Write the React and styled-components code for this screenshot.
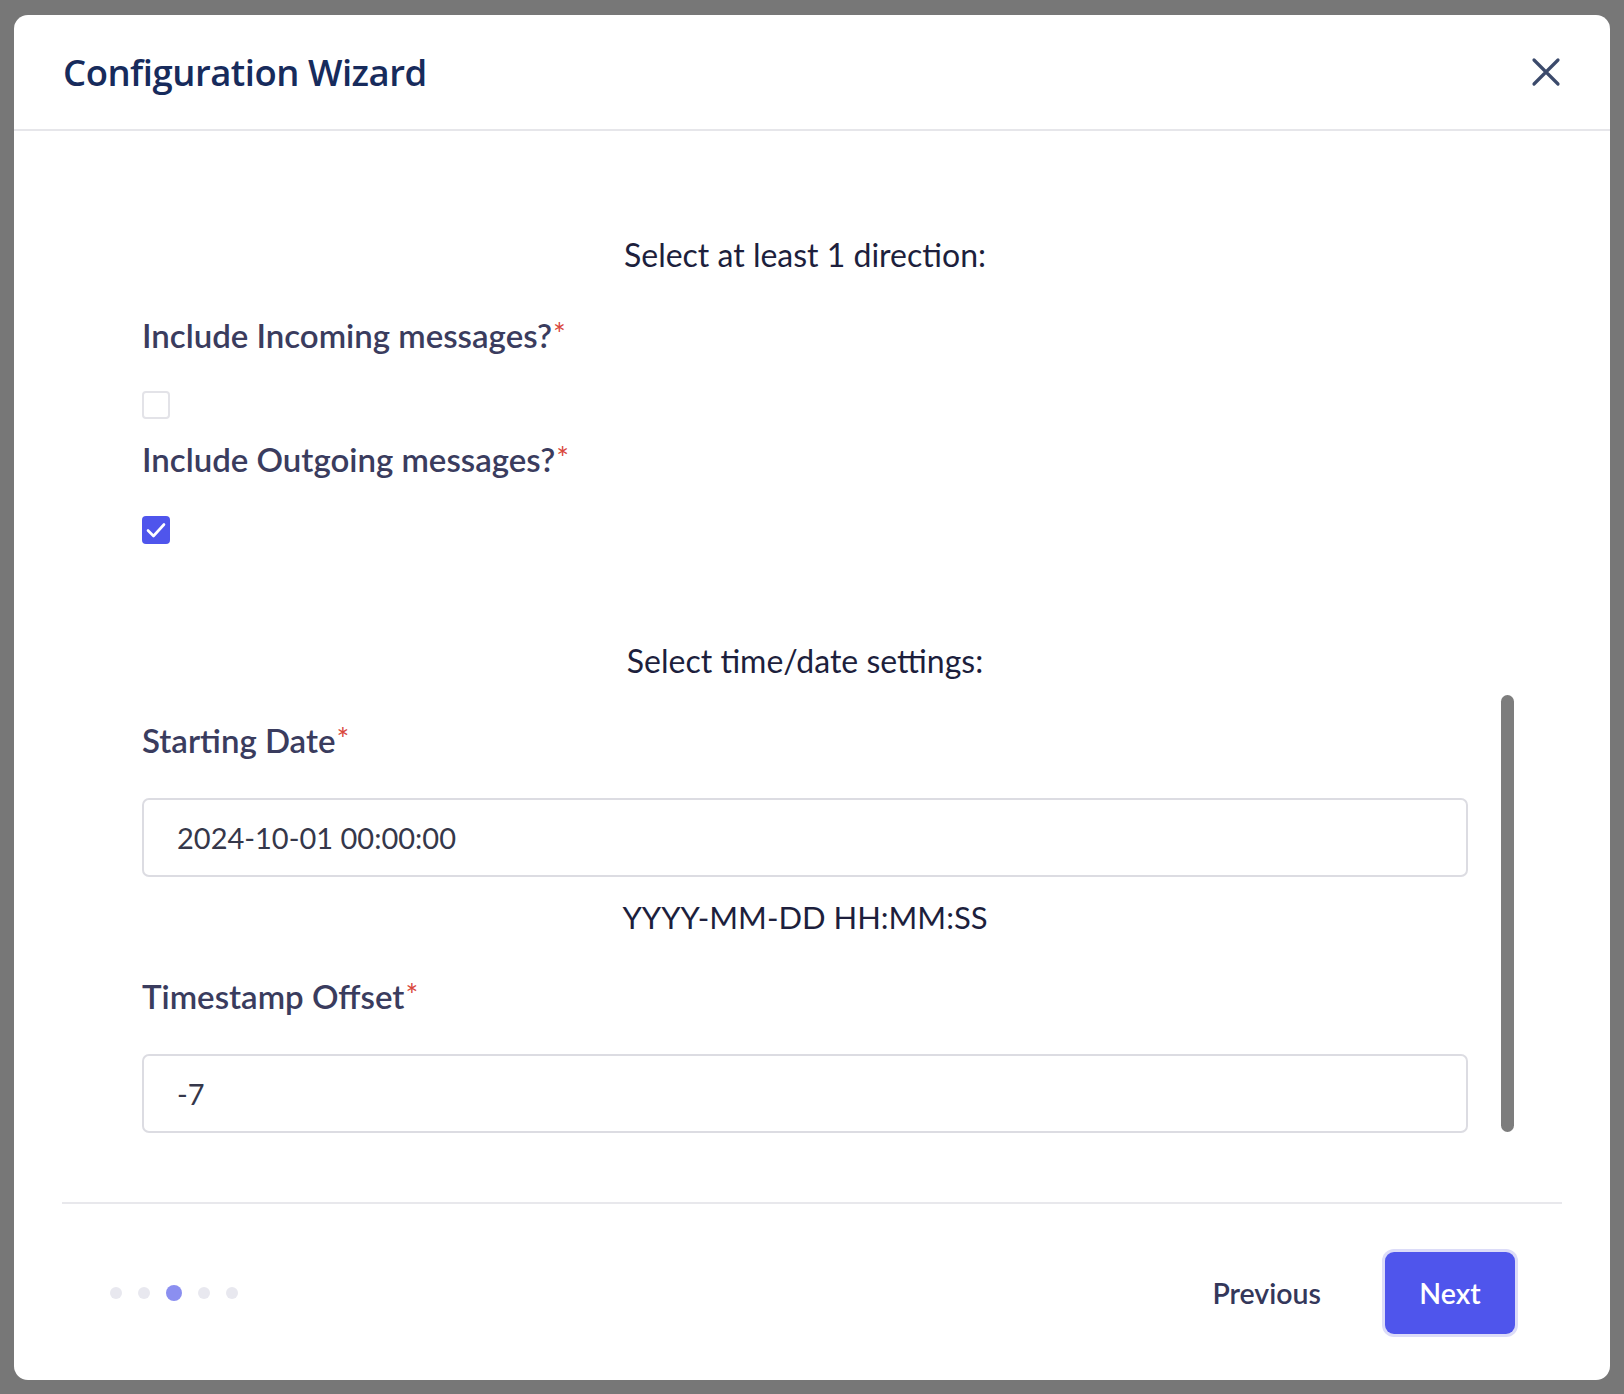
import React from "react";
import styled, { createGlobalStyle } from "styled-components";

const Global = createGlobalStyle`
  html, body { margin: 0; background: #777777; }
  body { font-family: Lato, "Noto Sans", sans-serif; }
  * { box-sizing: border-box; }
`;

const App = () => {
  return (
    <>
      <Global />
      <Page>
        <Modal>
          <Header>
            <Title>Configuration Wizard</Title>
            <CloseBtn aria-label="close">
              <svg width="32" height="32" viewBox="0 0 32 32">
                <path d="M4 4 L28 28 M28 4 L4 28" stroke="#3b4a6b" strokeWidth="3.2" strokeLinecap="round" />
              </svg>
            </CloseBtn>
          </Header>
          <Body>
            <Form>
              <Heading $top={104}>Select at least 1 direction:</Heading>
              <Label $top={40}>Include Incoming messages?<Req>*</Req></Label>
              <Check $top={36} />
              <Label $top={20}>Include Outgoing messages?<Req>*</Req></Label>
              <Check $top={37} $checked>
                <svg width="20" height="16" viewBox="0 0 20 16">
                  <path d="M2 8.5 L7.5 14 L18 2.5" stroke="#fff" strokeWidth="2.6" fill="none" strokeLinecap="round" strokeLinejoin="round" />
                </svg>
              </Check>
              <Heading $top={97}>Select time/date settings:</Heading>
              <Label $top={39}>Starting Date<Req>*</Req></Label>
              <Input $top={38} defaultValue="2024-10-01 00:00:00" />
              <Hint>YYYY-MM-DD HH:MM:SS</Hint>
              <Label $top={39}>Timestamp Offset<Req>*</Req></Label>
              <Input $top={38} defaultValue="-7" />
            </Form>
            <Thumb />
          </Body>
          <Footer>
            <Dots>
              <Dot />
              <Dot />
              <Dot $active />
              <Dot />
              <Dot />
            </Dots>
            <Actions>
              <PrevBtn>Previous</PrevBtn>
              <NextBtn>Next</NextBtn>
            </Actions>
          </Footer>
        </Modal>
      </Page>
    </>
  );
};

const Page = styled.div`
  width: 1624px;
  height: 1394px;
  padding: 15px 14px 14px 14px;
`;

const Modal = styled.div`
  width: 100%;
  height: 1365px;
  background: #fff;
  border-radius: 14px;
  display: flex;
  flex-direction: column;
  overflow: hidden;
`;

const Header = styled.div`
  height: 116px;
  flex-shrink: 0;
  border-bottom: 2px solid #e6e6ea;
  display: flex;
  align-items: center;
  justify-content: space-between;
  padding: 0 48px 0 49px;
`;

const Title = styled.h1`
  margin: 0;
  font-family: "Open Sans", sans-serif;
  font-weight: 600;
  font-size: 36.5px;
  letter-spacing: -0.5px;
  color: #172b5c;
`;

const CloseBtn = styled.button`
  border: 0;
  background: none;
  padding: 0;
  display: flex;
  cursor: pointer;
`;

const Body = styled.div`
  position: relative;
  display: flex;
  padding: 0 48px 0 128px;
  height: 1071px;
`;

const Form = styled.div`
  width: 1326px;
  display: flex;
  flex-direction: column;
`;

const Heading = styled.div`
  margin-top: ${(p) => p.$top}px;
  height: 40px;
  line-height: 40px;
  text-align: center;
  font-size: 32px;
  color: #1d1f3d;
`;

const Label = styled.div`
  margin-top: ${(p) => p.$top}px;
  height: 40px;
  line-height: 36px;
  font-size: 33px;
  font-weight: 600;
  color: #3a3c5e;
`;

const Req = styled.span`
  color: #d9473c;
  font-weight: 400;
  margin-left: 1px;
  vertical-align: 3px;
  font-size: 30px;
`;

const Check = styled.div`
  margin-top: ${(p) => p.$top}px;
  width: 28px;
  height: 28px;
  border-radius: 4px;
  border: ${(p) => (p.$checked ? "none" : "2px solid #e3e3e8")};
  background: ${(p) => (p.$checked ? "#4f55ec" : "#fff")};
  display: flex;
  align-items: center;
  justify-content: center;
`;

const Input = styled.input`
  margin-top: ${(p) => p.$top}px;
  height: 79px;
  width: 100%;
  border: 2px solid #dcdce2;
  border-radius: 7px;
  padding: 0 33px;
  font-family: Lato, sans-serif;
  font-size: 29px;
  color: #35374a;
  outline: none;
`;

const Hint = styled.div`
  margin-top: 20px;
  height: 40px;
  line-height: 40px;
  text-align: center;
  font-size: 31px;
  color: #1d1f3d;
`;

const Thumb = styled.div`
  position: absolute;
  left: 1487px;
  top: 564px;
  width: 13px;
  height: 437px;
  border-radius: 7px;
  background: #7d7d7d;
`;

const Footer = styled.div`
  margin: 0 48px;
  border-top: 2px solid #e8e8ec;
  padding: 48px 47px 0 48px;
  display: flex;
  align-items: center;
  justify-content: space-between;
  height: 132px;
`;

const Dots = styled.div`
  display: flex;
  align-items: center;
  gap: 16px;
`;

const Dot = styled.span`
  width: ${(p) => (p.$active ? 16 : 12)}px;
  height: ${(p) => (p.$active ? 16 : 12)}px;
  border-radius: 50%;
  background: ${(p) => (p.$active ? "#8b8ff0" : "#e8e8ef")};
`;

const Actions = styled.div`
  display: flex;
  align-items: center;
  gap: 64px;
`;

const PrevBtn = styled.button`
  border: 0;
  background: none;
  font-family: Lato, sans-serif;
  font-weight: 600;
  font-size: 28.5px;
  color: #34375a;
  padding: 0;
`;

const NextBtn = styled.button`
  width: 130px;
  height: 82px;
  border: 0;
  border-radius: 9px;
  background: #4f55ec;
  box-shadow: 0 0 0 3px #dcdcf8;
  color: #fff;
  font-family: Lato, sans-serif;
  font-weight: 600;
  font-size: 28.5px;
`;

export default App;
